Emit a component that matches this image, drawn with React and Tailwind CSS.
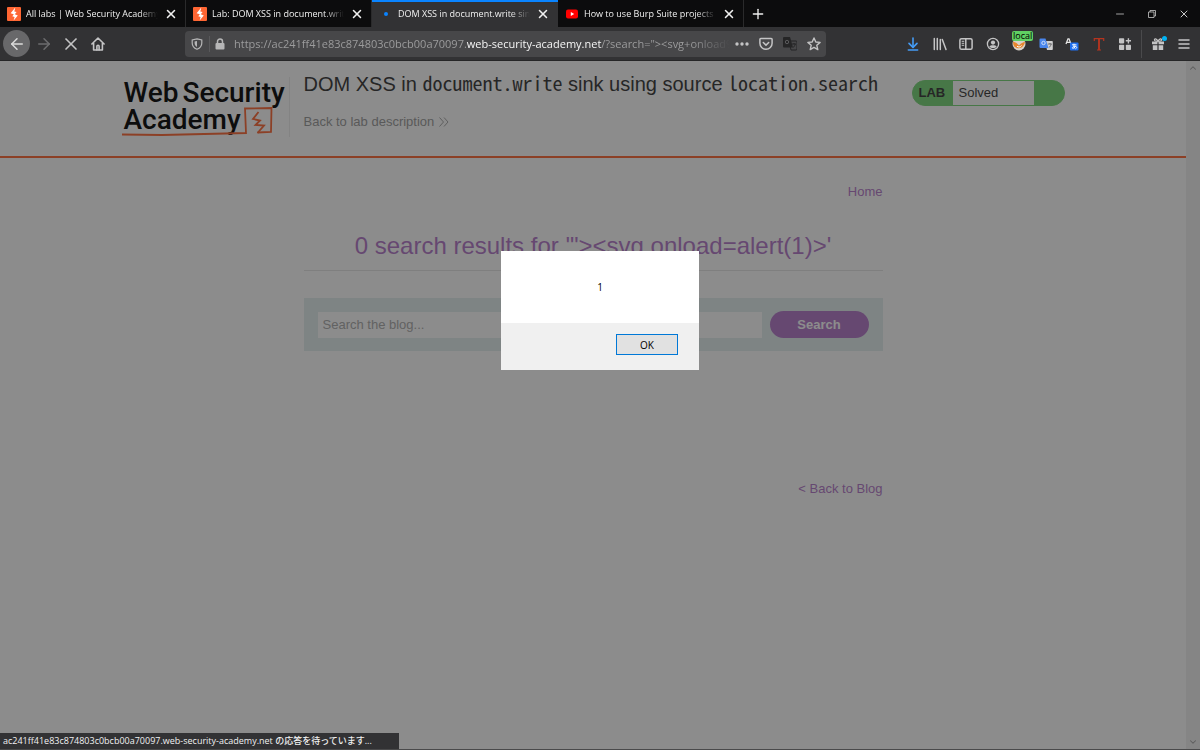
import {
    ArrowDownToLine,
    ArrowLeft,
    ArrowRight,
    ChevronDown,
    ChevronUp,
    Minus,
    Plus,
    X,
} from 'lucide-react';

const tabs = [
    { title: 'All labs | Web Security Academy', icon: 'burp' },
    { title: 'Lab: DOM XSS in document.write sink', icon: 'burp' },
    { title: 'DOM XSS in document.write sink', icon: 'loading', active: true },
    { title: 'How to use Burp Suite projects', icon: 'youtube' },
];

function BurpIcon() {
    return (
        <svg viewBox="0 0 14 14" className="size-3.5 shrink-0">
            <rect width="14" height="14" rx="1" fill="#ff6633" />
            <path
                d="M8.300 0.600 3.600 6.200 6.800 7.300 5.300 9.300 7.600 9.900 6.600 13.400 10.800 8.400 7.800 7.300 9.600 4.900 7.300 4.400Z"
                fill="#fff"
            />
        </svg>
    );
}

function YoutubeIcon() {
    return (
        <svg viewBox="0 0 14 14" className="size-3.5 shrink-0">
            <rect x="1" y="2.500" width="12" height="9" rx="2" fill="#f00" />
            <path d="M5.800 5v4l3.400-2Z" fill="#fff" />
        </svg>
    );
}

function LoadingDot() {
    return (
        <span className="flex size-3.5 shrink-0 items-center justify-center">
            <span className="size-1 rounded-full bg-[#0a84ff]" />
        </span>
    );
}

function Tab({ title, icon, active }) {
    return (
        <div
            className={
                active
                    ? 'flex w-[186px] items-center border-t-2 border-[#0a84ff] bg-[#323234] pr-2 pb-0.5 pl-[7px]'
                    : 'flex w-[186px] items-center border-r border-[#2a2a2b] pr-[7px] pl-[7px]'
            }
        >
            {icon === 'burp' && <BurpIcon />}
            {icon === 'youtube' && <YoutubeIcon />}
            {icon === 'loading' && <LoadingDot />}
            <span className="ml-[5px] flex-1 overflow-hidden mask-r-from-85% text-[9px] leading-4 font-medium whitespace-nowrap">
                {title}
            </span>
            <button type="button" aria-label="Close tab" className="ml-1.5">
                <X className="size-3.5" strokeWidth={2.6} />
            </button>
        </div>
    );
}

function WindowControls() {
    return (
        <div className="ml-auto flex items-center text-[#c8c8c8]">
            <button type="button" aria-label="Minimize" className="flex w-8 justify-center">
                <Minus className="size-3" strokeWidth={1.6} />
            </button>
            <button type="button" aria-label="Restore" className="flex w-8 justify-center">
                <svg viewBox="0 0 10 10" className="size-2.5" fill="none" stroke="currentColor" strokeWidth="0.800">
                    <path d="M1.500 3h5.500v5.500h-5.500ZM3 3V1.500h5.500V7H7" />
                </svg>
            </button>
            <button type="button" aria-label="Close window" className="flex w-8 justify-center">
                <X className="size-3" strokeWidth={2} />
            </button>
        </div>
    );
}

function ToolButton({ label, children }) {
    return (
        <button
            type="button"
            aria-label={label}
            className="relative flex h-6 w-6 items-center justify-center text-[#c4c4c5]"
        >
            {children}
        </button>
    );
}

function NavButtons() {
    return (
        <div className="flex items-center text-[#c4c4c5]">
            <button
                type="button"
                aria-label="Back"
                className="flex size-[27px] items-center justify-center rounded-full bg-[#68686a] text-[#dcdcdc]"
            >
                <ArrowLeft className="size-[18px]" />
            </button>
            <button
                type="button"
                aria-label="Forward"
                className="flex size-[27px] items-center justify-center text-[#6c6c6e]"
            >
                <ArrowRight className="size-[18px]" />
            </button>
            <button
                type="button"
                aria-label="Stop"
                className="flex size-[27px] items-center justify-center"
            >
                <X className="size-5" />
            </button>
            <button
                type="button"
                aria-label="Home"
                className="flex size-[27px] items-center justify-center"
            >
                <svg viewBox="0 0 14 14" className="size-3.5" fill="none" stroke="currentColor" strokeWidth="1.600" strokeLinejoin="round" strokeLinecap="round">
                    <path d="M0.900 7 7 1l6.100 6M2.600 6v7h8.800V6" />
                    <path d="M5.900 13V9.300a1.100 1.100 0 0 1 2.200 0V13" />
                </svg>
            </button>
        </div>
    );
}

function UrlBar() {
    return (
        <div className="mr-[75px] ml-[74px] flex h-[26px] min-w-0 flex-1 items-center rounded-sm bg-[#474749] pl-1.5 text-[#b6b6b7]">
            <svg viewBox="0 0 12 12" className="size-3 shrink-0" fill="none" stroke="currentColor" strokeWidth="1.200">
                <path d="M6 0.800 10.800 2v3c0 3-1.600 5-4.800 6.300C2.800 10 1.200 8 1.200 5V2Z" />
                <path d="M6 3v6C4.400 8 3.600 6.800 3.600 5V3.600Z" fill="currentColor" stroke="none" />
            </svg>
            <span className="ml-1.5 h-4 w-px bg-[#59595b]" />
            <svg viewBox="0 0 12 12" className="ml-1 size-3 shrink-0" fill="currentColor">
                <rect x="1.500" y="5" width="9" height="6.500" rx="1" />
                <path d="M3.500 5.500V3.500a2.500 2.500 0 0 1 5 0v2" fill="none" stroke="currentColor" strokeWidth="1.500" />
            </svg>
            <span className="ml-2 flex-1 overflow-hidden mask-r-from-92% text-[11px] leading-4 whitespace-nowrap text-[#9b9b9c]">
                https://ac241ff41e83c874803c0bcb00a70097.
                <span className="text-[#f5f5f5]">web-security-academy.net</span>
                /?search="&gt;&lt;svg+onload%3Dalert(1)&gt;
            </span>
            <ToolButton label="Page actions">
                <svg viewBox="0 0 14 4" className="w-3.5" fill="currentColor">
                    <circle cx="2" cy="2" r="1.700" />
                    <circle cx="7" cy="2" r="1.700" />
                    <circle cx="12" cy="2" r="1.700" />
                </svg>
            </ToolButton>
            <ToolButton label="Save to Pocket">
                <svg viewBox="0 0 14 14" className="size-3.5" fill="none" stroke="currentColor" strokeWidth="1.500" strokeLinecap="round" strokeLinejoin="round">
                    <path d="M1.800 1.500h10.400a0.900 0.900 0 0 1 0.900 0.900v3.800a6.100 6.100 0 0 1-12.200 0V2.400a0.900 0.900 0 0 1 0.900-0.900Z" />
                    <path d="m4.300 5.500 2.700 2.600 2.700-2.600" />
                </svg>
            </ToolButton>
            <ToolButton label="Translate page">
                <svg viewBox="0 0 14 14" className="size-3.5">
                    <path d="M6 4h7a1 1 0 0 1 1 1v7a1 1 0 0 1-1 1H8Z" fill="#474749" stroke="#252526" />
                    <path d="M1 0h6l3 10.500H1a1 1 0 0 1-1-1V1a1 1 0 0 1 1-1Z" fill="#252526" />
                    <circle cx="4" cy="5" r="1.700" fill="none" stroke="#5a5a5c" />
                    <path d="M9 7h4M11 6v1M12.300 7c-0.500 2-1.500 3-2.300 3.600" stroke="#252526" fill="none" />
                </svg>
            </ToolButton>
            <ToolButton label="Bookmark">
                <svg viewBox="0 0 14 14" className="size-3.5" fill="none" stroke="currentColor" strokeWidth="1.400" strokeLinejoin="round">
                    <path d="m7 1 1.800 4 4.300 0.400-3.300 2.900 1 4.300L7 10.400l-3.800 2.200 1-4.300L0.900 5.400 5.200 5Z" />
                </svg>
            </ToolButton>
        </div>
    );
}

function ExtensionButtons() {
    return (
        <div className="flex w-[236px] shrink-0 items-center justify-between">
            <ToolButton label="Downloads">
                <ArrowDownToLine className="size-4 text-[#459cf5]" strokeWidth={2.4} />
            </ToolButton>
            <ToolButton label="Library">
                <svg viewBox="0 0 14 14" className="size-3.5" fill="none" stroke="currentColor" strokeWidth="1.500" strokeLinecap="round">
                    <path d="M1.300 1.500v11M4.300 1.500v11M7.300 2.500v10M9.300 2.500l3.700 10" />
                </svg>
            </ToolButton>
            <ToolButton label="Sidebars">
                <svg viewBox="0 0 14 14" className="size-3.5" fill="none" stroke="currentColor" strokeWidth="1.500">
                    <rect x="0.900" y="1.700" width="12.200" height="10.600" rx="1.600" />
                    <path d="M6.800 2v10" />
                    <path d="M2.700 4.300h2.500M2.700 6.300h2.500M2.700 8.300h2.500" strokeWidth="1" />
                </svg>
            </ToolButton>
            <ToolButton label="Account">
                <svg viewBox="0 0 14 14" className="size-3.5" fill="none" stroke="currentColor" strokeWidth="1.300">
                    <circle cx="7" cy="7" r="5.600" />
                    <circle cx="7" cy="5.600" r="2.100" fill="currentColor" stroke="none" />
                    <path d="M3.300 9.400c1-1.600 6.400-1.600 7.400 0-1.600 2.200-5.800 2.200-7.400 0Z" fill="currentColor" stroke="none" />
                </svg>
            </ToolButton>
            <ToolButton label="FoxyProxy">
                <svg viewBox="0 0 14 14" className="size-3.5">
                    <circle cx="7" cy="7" r="6.500" fill="#d9d2c8" />
                    <path d="M1 4.500C1 9 3 10.800 6 11.200c4 0.200 6.500-2.600 7-6.700L9 6.500 7 8.500 4.500 6Z" fill="#e8862e" />
                    <path d="M5 9.200c1.500 1.200 3 1 4.500-0.700" stroke="#fff" fill="none" />
                </svg>
                <span className="absolute -top-px left-[5px] rounded-xs bg-[#5fcf62] px-px text-[9px] leading-[10px] font-medium text-black">
                    local
                </span>
            </ToolButton>
            <ToolButton label="Google Translate">
                <svg viewBox="0 0 14 14" className="size-3.5">
                    <path d="M6 4h7a0.800 0.800 0 0 1 0.800 0.800v7.400a0.800 0.800 0 0 1-0.800 0.800H8Z" fill="#cfcfd0" />
                    <path d="M1.500 1.500h5L9.500 11h-8a1 1 0 0 1-1-1V2.500a1 1 0 0 1 1-1Z" fill="#4a86ec" />
                    <circle cx="4.500" cy="6" r="1.700" fill="none" stroke="#cfe0fb" />
                    <path d="M8.800 7h4M11 6v1M12.200 7c-0.500 2-1.300 2.800-2.200 3.500" stroke="#59595b" fill="none" strokeWidth="0.800" />
                </svg>
            </ToolButton>
            <ToolButton label="Translate selection">
                <svg viewBox="0 0 14 14" className="size-3.5">
                    <path d="M1 7 3 1.800h1L6 7M1.700 5.300h3.600" fill="none" stroke="#e4e4e4" strokeWidth="1.300" />
                    <rect x="5" y="5.500" width="8.500" height="8" rx="1" fill="#1e6ff0" />
                    <path d="M7 7.800h4.500M9 6.700c-0.300 2 0 3.300 0.500 4.600M10.800 8.800c-1 2-3 3.200-3.500 2.200-0.300-1.200 3.700-2.600 4.400-0.900 0.200 0.900-0.700 1.600-1.400 1.700" fill="none" stroke="#fff" strokeWidth="0.900" />
                </svg>
            </ToolButton>
            <ToolButton label="Text tool">
                <svg viewBox="0 0 14 14" className="size-3.5" fill="none" stroke="#b5341f" strokeWidth="1.200">
                    <path d="M2.300 4V1.600h9.400V4M5 13h4" />
                    <path d="M7 1.600V13" strokeWidth="1.900" />
                </svg>
            </ToolButton>
            <ToolButton label="Extensions">
                <svg viewBox="0 0 14 14" className="size-3.5" fill="currentColor">
                    <rect x="1" y="1.200" width="5.200" height="5.200" rx="0.800" />
                    <rect x="1" y="7.800" width="5.200" height="5.200" rx="0.800" />
                    <rect x="7.800" y="7.800" width="5.200" height="5.200" rx="0.800" />
                    <path d="M9.700 1.200h1.400v1.900H13v1.400h-1.900v1.900H9.700V4.500H7.800V3.100h1.900Z" />
                </svg>
            </ToolButton>
        </div>
    );
}

function Toolbar() {
    return (
        <div className="flex h-[34px] items-center border-b border-[#262627] bg-[#323234] pr-1 pl-[3px]">
            <NavButtons />
            <UrlBar />
            <ExtensionButtons />
            <span className="mx-1 h-7 w-px bg-[#4a4a4c]" />
            <div className="flex items-center gap-0.5">
                <ToolButton label="What's new">
                    <svg viewBox="0 0 14 14" className="size-3.5" fill="currentColor">
                        <path d="M1 4.500h5.400v2.800H1ZM7.600 4.500H13v2.800H7.600ZM1.800 8.300h4.600V13H1.800ZM7.600 8.300h4.600V13H7.600Z" />
                        <path d="M7 4.500C5.500 1 3 1.500 3.500 3.200 3.800 4.200 5.500 4.500 7 4.500c1.500 0 3.200-0.300 3.500-1.300C11 1.500 8.500 1 7 4.500Z" fill="none" stroke="currentColor" strokeWidth="1.200" />
                    </svg>
                    <span className="absolute top-1 right-[3px] size-[5px] rounded-full bg-[#00b3f4]" />
                </ToolButton>
                <ToolButton label="Menu">
                    <svg viewBox="0 0 12 12" className="size-3" fill="none" stroke="currentColor" strokeWidth="1.500" strokeLinecap="round">
                        <path d="M1 2h10M1 6h10M1 10h10" />
                    </svg>
                </ToolButton>
            </div>
        </div>
    );
}

function AcademyLogo() {
    return (
        <a
            href="#academy"
            className="relative flex h-[60px] w-[168px] flex-col border-r border-[#ececec] pt-0.5 pl-0.5 font-[Roboto] text-[28px] leading-[27px] font-medium text-black"
        >
            <span className="flex gap-1">
                <span>Web</span>
                <span>Security</span>
            </span>
            <span>Academy</span>
            <svg
                viewBox="0 0 152 32"
                className="absolute top-[30px] left-0 h-8 w-[152px]"
                fill="none"
                stroke="#ff6633"
                strokeWidth="1.800"
            >
                <path d="M0 27.500 40 28l84-2-1-24.500 26.500-0.500-0.500 24-13.500 0.500" />
                <path d="M136.500 5 131 12l7 1.500-4.500 4.500 8.500 0.500-6.500 7.500" strokeWidth="1.800" />
            </svg>
        </a>
    );
}

function Code({ children }) {
    return (
        <code className="font-['Noto_Sans_CJK_JP',monospace] leading-none [font-feature-settings:'hwid']">
            {children}
        </code>
    );
}

function LabHeader() {
    return (
        <header className="border-b-2 border-[#ff6633] px-4 pt-4 pb-[19px]">
            <div className="mx-auto flex max-w-[943px] items-start">
                <AcademyLogo />
                <div className="ml-3.5 flex-1 whitespace-nowrap">
                    <h2 className="-mt-1 text-xl leading-[22px] text-[#333333]">
                        DOM XSS in <Code>document.write</Code> sink using source{' '}
                        <Code>location.search</Code>
                    </h2>
                    <a
                        href="#description"
                        className="mt-[17px] flex items-center text-[13px] leading-5 text-[#999999]"
                    >
                        Back to lab description
                        <svg viewBox="0 0 12 12" className="ml-1 size-3" fill="none" stroke="currentColor" strokeWidth="0.900">
                            <path d="m1.500 1.500 4 4.500-4 4.500M6 1.500 10 6l-4 4.500" />
                        </svg>
                    </a>
                </div>
                <div className="mt-[3px] flex h-[26px] w-[153px] overflow-hidden rounded-full border border-[#75d475] bg-[#75d475] text-[13px] leading-6 text-[#333333]">
                    <span className="w-10 pl-1.5 font-bold">LAB</span>
                    <span className="flex-1 bg-white pl-1.5">Solved</span>
                    <span className="w-[30px]" />
                </div>
            </div>
        </header>
    );
}

function SearchPage() {
    return (
        <main className="mx-auto w-full max-w-[579px] text-[13px] leading-5 text-[#b377c9]">
            <nav className="pt-6 text-right">
                <a href="#home">Home</a>
            </nav>
            <h1 className="mt-7 border-b border-[#e4e4e4] pb-2 text-center text-2xl leading-8 whitespace-nowrap">
                0 search results for '"&gt;&lt;svg onload=alert(1)&gt;'
            </h1>
            <form className="mt-[27px] flex items-center gap-2 bg-[#e3eeee] px-3.5 py-[13px]">
                <input
                    type="text"
                    aria-label="Search the blog"
                    placeholder="Search the blog..."
                    className="h-[26px] flex-1 bg-white px-[5px] placeholder:text-[#aaaaaa]"
                />
                <button
                    type="button"
                    className="h-[27px] w-[99px] rounded-full bg-[#b377c9] font-bold text-white"
                >
                    Search
                </button>
            </form>
            <div className="mt-32 text-right">
                <a href="#blog">&lt; Back to Blog</a>
            </div>
        </main>
    );
}

function AlertDialog() {
    return (
        <div className="absolute inset-0 flex items-start justify-center bg-[#1a1a1a]/50 pt-[190px]">
            <div
                role="alertdialog"
                aria-label="Alert"
                className="w-[198px] bg-[#f0f0f0] font-['Open_Sans',sans-serif] text-[10px] leading-4 text-black"
            >
                <p className="bg-white py-7 text-center">1</p>
                <div className="flex justify-end px-[21px] pt-[11px] pb-[15px]">
                    <button
                        type="button"
                        className="h-[21px] w-[62px] border border-[#0078d7] bg-[#e1e1e1]"
                    >
                        OK
                    </button>
                </div>
            </div>
        </div>
    );
}

export default function App() {
    return (
        <div className="flex h-screen flex-col overflow-hidden border-b border-[#4a4a4b] bg-white font-['Liberation_Sans',Arial,sans-serif]">
            <div className="font-['Open_Sans','Noto_Sans',sans-serif]">
                <div className="flex h-[27px] bg-[#0c0c0d] text-[#f0f0f0]">
                    {tabs.map((tab) => (
                        <Tab key={tab.title} {...tab} />
                    ))}
                    <button type="button" aria-label="New tab" className="ml-1.5">
                        <Plus className="size-4" strokeWidth={2} />
                    </button>
                    <WindowControls />
                </div>
                <Toolbar />
            </div>

            <div className="relative flex min-h-0 flex-1">
                <div className="min-w-0 flex-1">
                    <LabHeader />
                    <SearchPage />
                </div>
                <div className="flex w-3.5 flex-col items-center justify-between bg-[#f0f0f0] py-0.5 text-[#a0a0a0]">
                    <ChevronUp className="size-2.5" strokeWidth={2.5} />
                    <ChevronDown className="size-2.5" strokeWidth={2.5} />
                </div>
                <AlertDialog />
                <div className="absolute bottom-0 left-0 h-4 w-[399px] overflow-hidden bg-[#323234] pl-[3px] font-['Open_Sans','Noto_Sans_CJK_JP',sans-serif] text-[9px] leading-4 font-medium whitespace-nowrap text-[#f0f0f0]">
                    ac241ff41e83c874803c0bcb00a70097.web-security-academy.net の応答を待っています...
                </div>
            </div>
        </div>
    );
}
